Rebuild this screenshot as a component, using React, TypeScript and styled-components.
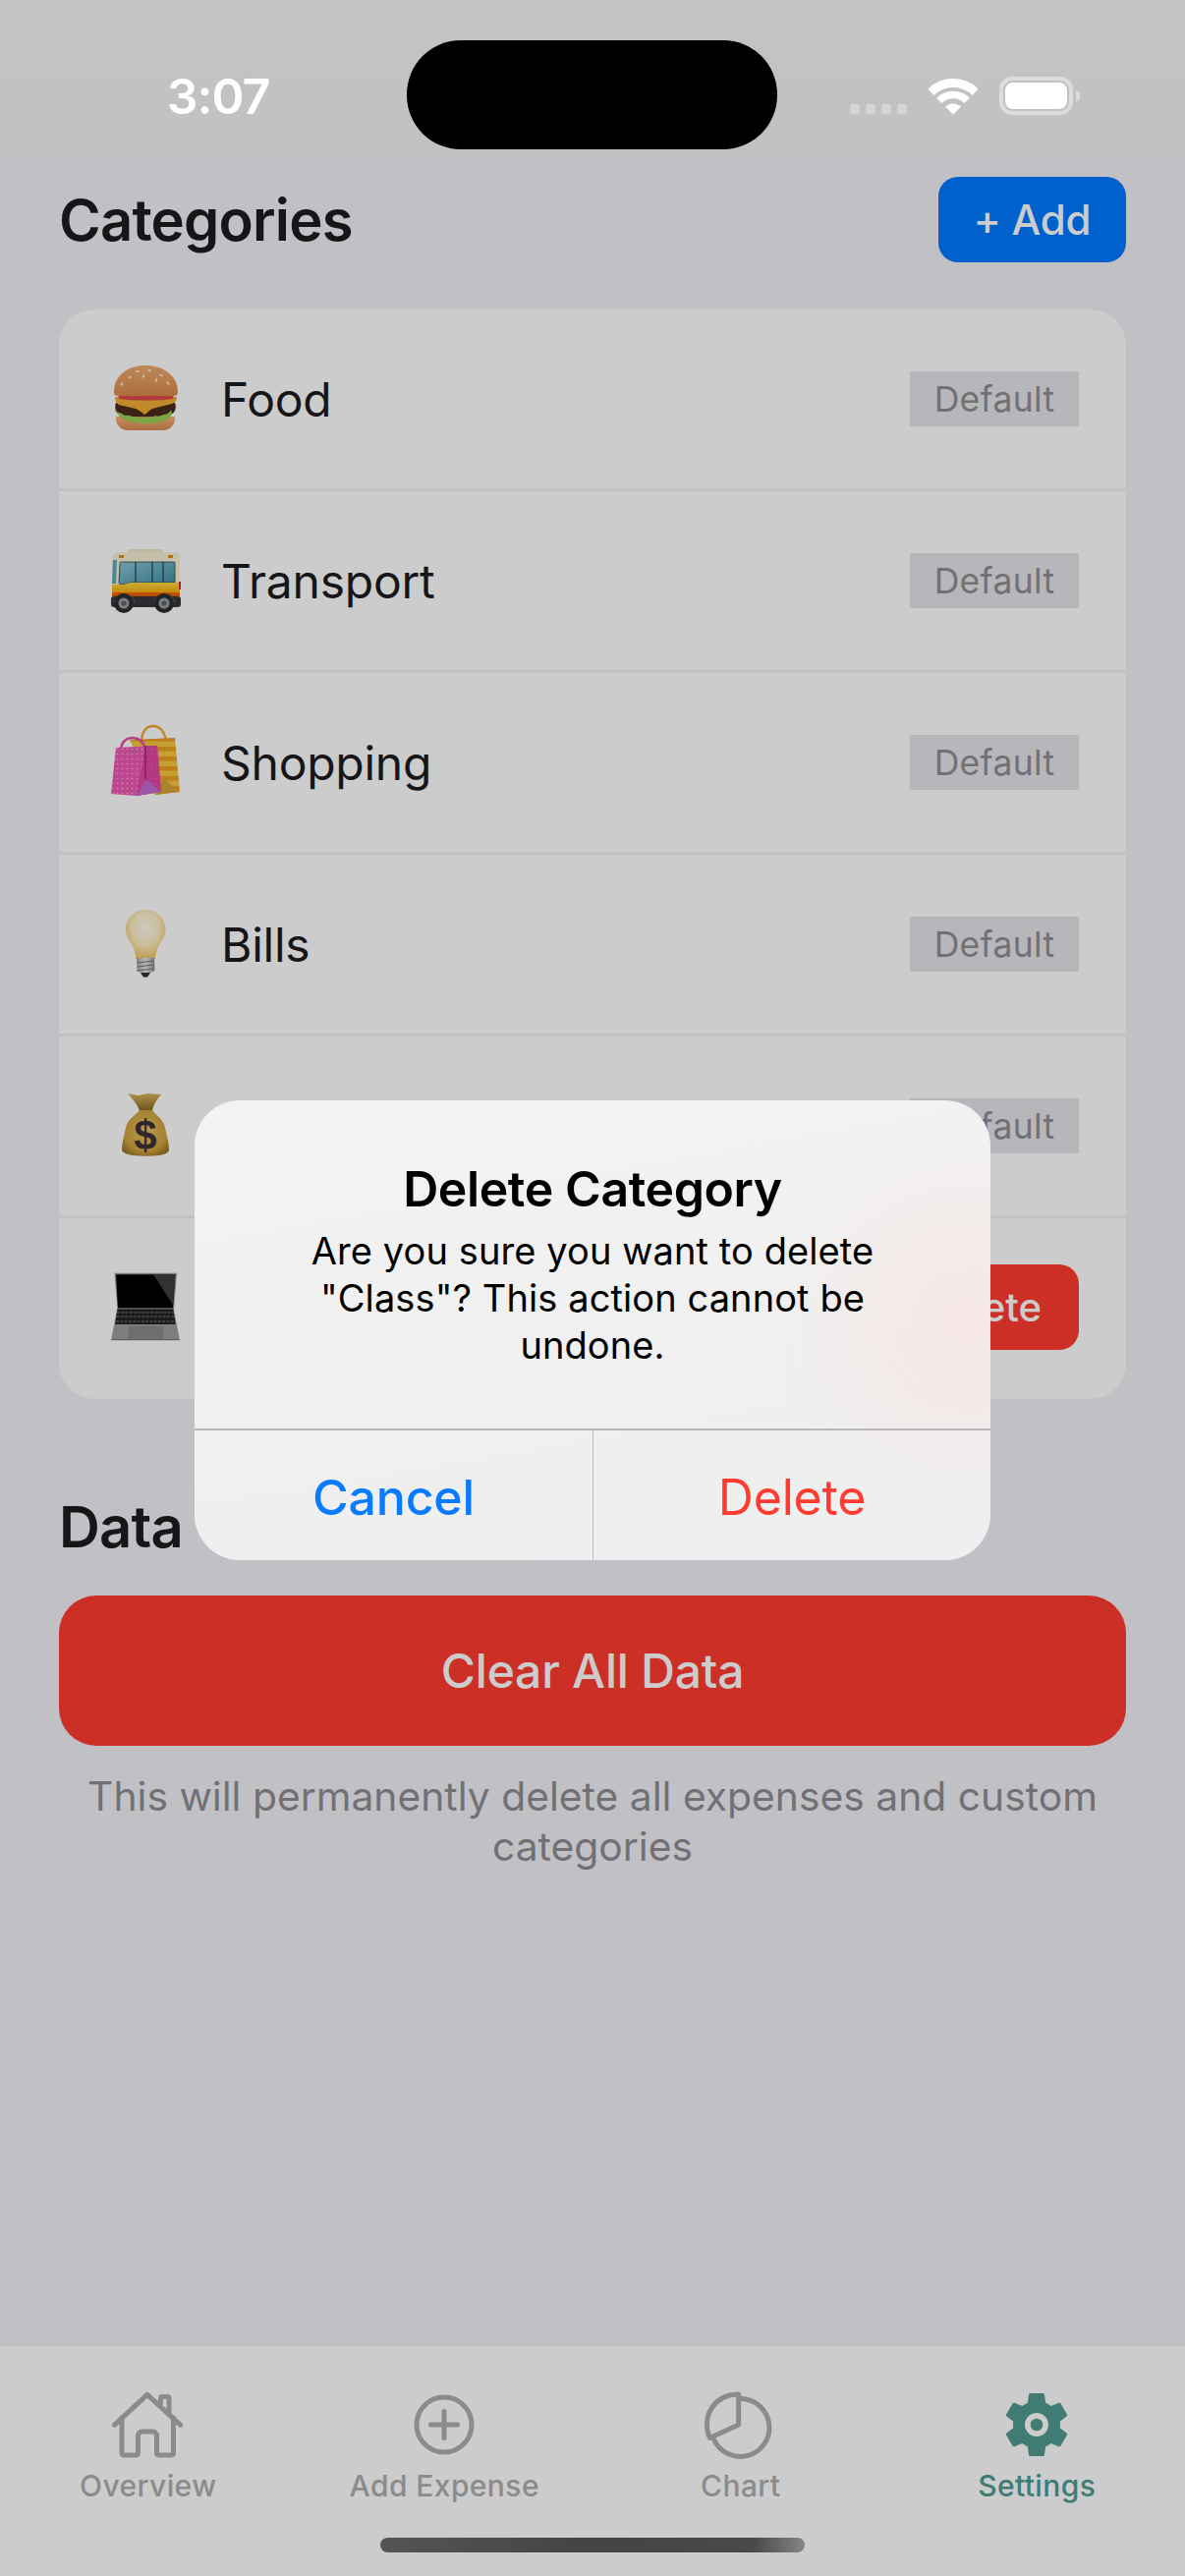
import React from "react";
import styled, { createGlobalStyle } from "styled-components";

const Global = createGlobalStyle`
  html, body { margin: 0; padding: 0; }
  body { font-family: Inter, "Noto Sans", sans-serif; -webkit-font-smoothing: antialiased; }
  #root { width: 1206px; height: 2622px; overflow: hidden; }
`;

const Page = styled.div`
  position: relative;
  width: 1206px;
  height: 2622px;
  display: flex;
  flex-direction: column;
  background: linear-gradient(180deg, #f4f4f4 0, #f2f2f7 190px);
  overflow: hidden;
`;

const StatusBar = styled.div`
  position: relative;
  z-index: 3;
  flex: none;
  height: 180px;
  display: grid;
  grid-template-columns: 414px 377px 1fr;
`;

const Time = styled.div`
  padding: 71px 0 0 30px;
  text-align: center;
  font-size: 50px;
  line-height: 54px;
  font-weight: 600;
  letter-spacing: -1px;
  color: #fff;
`;

const Island = styled.div`
  margin-top: 41px;
  height: 111px;
  border-radius: 55px;
  background: #000;
`;

const StatusIcons = styled.div`
  height: 117px;
  padding-left: 74px;
  display: flex;
  align-items: flex-end;
`;

const SignalDots = styled.div`
  display: flex;
  gap: 6px;
  margin-right: 22px;
  padding-bottom: 1px;
`;

const SignalDot = styled.span`
  width: 10px;
  height: 10px;
  border-radius: 3px;
  background: #d6d6d6;
`;

const Battery = styled.div`
  position: relative;
  box-sizing: border-box;
  width: 75px;
  height: 39px;
  margin-left: 22px;
  padding: 2px;
  border: 4px solid #dcdcdc;
  border-radius: 13px;
  &::after {
    content: "";
    position: absolute;
    right: -11px;
    top: 10px;
    width: 4px;
    height: 11px;
    border-radius: 0 4px 4px 0;
    background: #dcdcdc;
  }
`;

const BatteryFill = styled.div`
  width: 100%;
  height: 100%;
  border-radius: 8px;
  background: #fff;
`;

const Main = styled.main`
  flex: 1;
  padding: 0 60px;
`;

const HeaderRow = styled.div`
  height: 87px;
  display: flex;
  align-items: center;
  justify-content: space-between;
`;

const Title = styled.h2`
  margin: 0;
  font-size: 58px;
  line-height: 68px;
  font-weight: 600;
  letter-spacing: -0.8px;
  color: #1c1c1e;
`;

const AddButton = styled.button`
  width: 191px;
  height: 87px;
  border: 0;
  border-radius: 20px;
  background: #007aff;
  color: #fff;
  font: 500 42px Inter, sans-serif;
  letter-spacing: -0.2px;
`;

const Card = styled.div`
  margin-top: 48px;
  background: #fff;
  border-radius: 36px;
  overflow: hidden;
`;

const Row = styled.div`
  box-sizing: border-box;
  height: 185px;
  padding: 0 48px 0 52px;
  display: flex;
  align-items: center;
  border-bottom: 3px solid #f2f2f7;
  &:last-child {
    border-bottom: 0;
    height: 184px;
    padding-bottom: 3px;
  }
`;

const EmojiIcon = styled.svg`
  flex: none;
  width: 72px;
  height: 72px;
  overflow: visible;
  margin-right: 41px;
`;

const RowName = styled.span`
  flex: 1;
  font-size: 48px;
  font-weight: 400;
  letter-spacing: -0.25px;
  color: #1c1c1e;
`;

const DefaultBadge = styled.span`
  width: 172px;
  height: 56px;
  display: flex;
  align-items: center;
  justify-content: center;
  background: #e5e5ea;
  color: #8e8e93;
  font-size: 35.500px;
  letter-spacing: 0.3px;
`;

const DeleteChip = styled.button`
  height: 87px;
  padding: 0 38px;
  border: 0;
  border-radius: 20px;
  background: #ff3b30;
  color: #fff;
  font: 500 40px Inter, sans-serif;
`;

const DataTitle = styled(Title)`
  margin-top: 96px;
`;

const ClearButton = styled.button`
  display: block;
  width: 100%;
  height: 153px;
  margin-top: 36px;
  border: 0;
  border-radius: 38px;
  background: #ff3b30;
  color: #fff;
  font: 500 48px Inter, sans-serif;
  letter-spacing: -0.2px;
`;

const Note = styled.p`
  margin: 26px 0 0;
  text-align: center;
  font-size: 40.800px;
  line-height: 51px;
  color: #8e8e93;
`;

const TabBar = styled.nav`
  flex: none;
  position: relative;
  height: 234px;
  display: grid;
  grid-template-columns: repeat(4, 1fr);
  background: #fff;
  box-shadow: 0 -6px 16px rgba(0, 0, 0, 0.025);
`;

const Tab = styled.div`
  padding-top: 40px;
  display: flex;
  flex-direction: column;
  align-items: center;
`;

const TabIcon = styled.svg`
  width: 80px;
  height: 80px;
  fill: none;
  stroke: #aeaeae;
  stroke-width: 5;
  stroke-linecap: round;
  stroke-linejoin: round;
`;

const GearIcon = styled.svg`
  width: 82px;
  height: 80px;
  fill: #519a92;
`;

const TabLabel = styled.span<{ $active?: boolean }>`
  margin-top: 4px;
  font-size: 30px;
  line-height: 36px;
  font-weight: 500;
  letter-spacing: 0.4px;
  color: ${(p) => (p.$active ? "#519a92" : "#aeaeae")};
`;

const HomeIndicator = styled.div`
  position: absolute;
  left: 387px;
  bottom: 24px;
  width: 432px;
  height: 15px;
  border-radius: 8px;
  background: linear-gradient(90deg, #6a6a6a 0, #555 50%, #5c5c5c 88%, #a8a8a8 100%);
`;

const Scrim = styled.div`
  position: absolute;
  inset: 0;
  z-index: 2;
  padding-top: 85px;
  display: flex;
  align-items: center;
  justify-content: center;
  box-sizing: border-box;
  background: rgba(0, 0, 0, 0.2);
`;

const Dialog = styled.div`
  width: 810px;
  height: 468px;
  display: flex;
  flex-direction: column;
  border-radius: 46px;
  overflow: hidden;
  background:
    radial-gradient(circle at 97% 48%, rgba(250, 224, 220, 0.55) 0, rgba(250, 224, 220, 0) 24%),
    linear-gradient(170deg, #f3f3f3 0, #efefef 70%, #eeeff1 100%);
`;

const DialogBody = styled.div`
  flex: 1;
  padding: 57px 50px 0;
  text-align: center;
  color: #000;
`;

const DialogTitle = styled.div`
  font-size: 50px;
  line-height: 66px;
  font-weight: 600;
  letter-spacing: -0.4px;
`;

const DialogText = styled.div`
  margin-top: 6px;
  font-size: 38px;
  line-height: 48px;
  letter-spacing: 0.1px;
`;

const DialogActions = styled.div`
  flex: none;
  height: 132px;
  display: grid;
  grid-template-columns: 1fr 1fr;
  border-top: 2px solid #b7b7ba;
`;

const DialogAction = styled.button<{ $danger?: boolean }>`
  border: 0;
  padding: 4px 0 0;
  background: none;
  font-family: Inter, sans-serif;
  font-size: 50px;
  font-weight: ${(p) => (p.$danger ? 400 : 500)};
  letter-spacing: -0.2px;
  color: ${(p) => (p.$danger ? "#ff3b30" : "#0a7aff")};
  border-left: ${(p) => (p.$danger ? "1px solid #c0c0c3" : "0")};
`;

const Burger = () => (
  <EmojiIcon viewBox="0 0 72 72">
    <defs>
      <linearGradient id="bun" x1="0" y1="0" x2="0" y2="1">
        <stop offset="0" stopColor="#eeaa70" />
        <stop offset="1" stopColor="#d98a4c" />
      </linearGradient>
      <linearGradient id="bunb" x1="0" y1="0" x2="0" y2="1">
        <stop offset="0" stopColor="#f6b27a" />
        <stop offset="1" stopColor="#d98a52" />
      </linearGradient>
    </defs>
    <path d="M6 54h60c1 8-5 14-12 14H18C11 68 5 62 6 54z" fill="url(#bunb)" />
    <path d="M6 40h60c2 5 0 10-4 12-8 3-44 3-52 0-4-2-6-7-4-12z" fill="#4b2a1c" />
    <path d="M4 47c3 2 5 3 8 4 3 3 5 1 8 2 3 2 5 1 8 1 3 2 6 2 9 0 3 1 6 1 9-1 3 1 5 1 8-1 3 0 6-1 8-5l1 4c-2 5-5 6-8 7-3 2-5 1-8 2-3 1-6 2-9 1-4 1-7 0-10-1-3 1-6-1-9-2-4 0-8-2-10-5z" fill="#9ccf55" />
    <path d="M5 34h63c0 3-1 5-5 7l-20 5c-4 2-6 5-8 6-2-2-5-4-9-6L9 42c-3-2-4-4-4-8z" fill="#f0ac35" />
    <path d="M8 31h57l-1 5c-14 2-41 2-55 0z" fill="#e0494c" />
    <path d="M4 29C4 12 18 2 36 2s33 10 33 27c0 3-2 4-5 4H9c-3 0-5-1-5-4z" fill="url(#bun)" />
    <g fill="#f8e8d0">
      <ellipse cx="28" cy="8" rx="2.200" ry="1" />
      <ellipse cx="40" cy="7" rx="2.200" ry="1" transform="rotate(25 40 7)" />
      <ellipse cx="52" cy="12" rx="2.200" ry="1" transform="rotate(30 52 12)" />
      <ellipse cx="34" cy="13" rx="2" ry="1" transform="rotate(-50 34 13)" />
      <ellipse cx="20" cy="14" rx="2" ry="1" transform="rotate(-40 20 14)" />
      <ellipse cx="47" cy="17" rx="2" ry="1" transform="rotate(-70 47 17)" />
      <ellipse cx="59" cy="20" rx="2" ry="1" transform="rotate(45 59 20)" />
      <ellipse cx="12" cy="21" rx="2" ry="1" transform="rotate(-50 12 21)" />
    </g>
  </EmojiIcon>
);

const Bus = () => (
  <EmojiIcon viewBox="0 0 72 72">
    <defs>
      <linearGradient id="glass" x1="0" y1="0" x2="1" y2="1">
        <stop offset="0" stopColor="#8cc8d6" />
        <stop offset="1" stopColor="#3f8ea6" />
      </linearGradient>
      <linearGradient id="band" x1="0" y1="0" x2="0" y2="1">
        <stop offset="0" stopColor="#fdd83e" />
        <stop offset="0.7" stopColor="#f6ae14" />
        <stop offset="0.75" stopColor="#ec6a06" />
        <stop offset="1" stopColor="#e65a00" />
      </linearGradient>
    </defs>
    <rect x="18" y="4" width="36" height="6" rx="2" fill="#eee7cb" />
    <path d="M8 7h58c3 0 5 2 5 5v42H2V18c0-7 2-11 6-11z" fill="#f7f0d4" />
    <path d="M3 15h4l-1 24H2z" fill="#5aa9bd" />
    <path d="M11 17h54c1 0 1 1 1 2v19H21c-3 0-5 2-7 2h-3c-1 0-2-1-2-2l1-19c0-1 0-2 1-2z" fill="url(#glass)" stroke="#2e3b3f" strokeWidth="0.8" />
    <path d="M26 17v21M43 17v21M54 17v21" stroke="#2e3b3f" strokeWidth="1.200" />
    <rect x="9" y="10" width="5" height="3" fill="#e88a10" />
    <rect x="59" y="10" width="5" height="3" fill="#e88a10" />
    <path d="M2 40h11c3 0 6-2 9-2h49v14H2z" fill="url(#band)" />
    <rect x="70" y="37" width="2" height="8" fill="#e0262c" />
    <rect x="1" y="52" width="71" height="11" rx="3" fill="#34363a" />
    <path d="M3 58a12 12 0 0 1 23 0zM44 58a12 12 0 0 1 23 0z" fill="#55585c" />
    <g fill="#2c2d30">
      <circle cx="14" cy="59" r="10" />
      <circle cx="55" cy="59" r="10" />
    </g>
    <g fill="#9a9ea3">
      <circle cx="14" cy="59" r="5.500" />
      <circle cx="55" cy="59" r="5.500" />
    </g>
    <g fill="#5d6166">
      <circle cx="14" cy="59" r="2.600" />
      <circle cx="55" cy="59" r="2.600" />
    </g>
  </EmojiIcon>
);

const Bags = () => (
  <EmojiIcon viewBox="0 0 72 72">
    <defs>
      <pattern id="stripes" width="10" height="10" patternUnits="userSpaceOnUse">
        <rect width="10" height="10" fill="#f5c842" />
        <rect width="10" height="4.500" fill="#eb9f24" />
      </pattern>
      <pattern id="dots" width="5" height="5" patternUnits="userSpaceOnUse">
        <rect width="5" height="5" fill="#ee59b4" />
        <circle cx="2.500" cy="2.500" r="0.800" fill="#f8b5dc" />
      </pattern>
    </defs>
    <path d="M32 14C33 3 38 -1 44 -1c7 0 11 6 13 14" fill="none" stroke="#f3a93a" strokeWidth="2.400" />
    <path d="M20 13l46-2 5 55-25 3z" fill="url(#stripes)" />
    <path d="M46 69l8-17 17 14z" fill="#d8a33b" />
    <path d="M11 24c0-8 5-13 12-13 7 0 11 5 13 11" fill="none" stroke="#e64fa8" strokeWidth="2.600" />
    <path d="M6 21l42-2 4 47-25 4-26-2z" fill="url(#dots)" />
    <path d="M36 19h12l4 47-25 4z" fill="#dd3f9d" opacity="0.750" />
    <path d="M27 70l10-17 15 13z" fill="#c46bd0" />
    <path d="M36 19v31l1 3" fill="none" stroke="#a91f7c" strokeWidth="1.400" />
    <rect x="24.500" y="21" width="1.400" height="6" fill="#8e8e8e" />
  </EmojiIcon>
);

const Bulb = () => (
  <EmojiIcon viewBox="0 0 72 72">
    <defs>
      <radialGradient id="glow" cx="0.5" cy="0.38" r="0.62">
        <stop offset="0" stopColor="#fffdf0" />
        <stop offset="0.55" stopColor="#fdeec4" />
        <stop offset="1" stopColor="#f0c560" />
      </radialGradient>
      <linearGradient id="screw" x1="0" y1="0" x2="1" y2="0">
        <stop offset="0" stopColor="#a3a3a3" />
        <stop offset="0.5" stopColor="#e6e6e6" />
        <stop offset="1" stopColor="#8d8d8d" />
      </linearGradient>
    </defs>
    <path d="M36 1c11.500 0 20.500 9 20.500 20 0 8-4.500 12-7 17-2 4-3 8-3.500 13H26.500c-.5-5-1.500-9-3.500-13-2.500-5-7-9-7-17C16 10 24.500 1 36 1z" fill="url(#glow)" />
    <path d="M27 50h18l.5 13c-3 3-16 3-18 0z" fill="url(#screw)" />
    <path d="M27.500 55l17.500-2M27.500 59l17.500-2M27.500 63l17.500-2" stroke="#777" strokeWidth="1" />
    <path d="M31 65h10l-2.500 4c-1.500 1-3.500 1-5 0z" fill="#333" />
  </EmojiIcon>
);

const MoneyBag = () => (
  <EmojiIcon viewBox="0 0 72 72">
    <defs>
      <radialGradient id="sack" cx="0.5" cy="0.45" r="0.65">
        <stop offset="0" stopColor="#e6c463" />
        <stop offset="0.7" stopColor="#cfa13d" />
        <stop offset="1" stopColor="#8f6f22" />
      </radialGradient>
      <linearGradient id="neck" x1="0" y1="0" x2="0" y2="1">
        <stop offset="0" stopColor="#d9b65b" />
        <stop offset="1" stopColor="#8a6620" />
      </linearGradient>
    </defs>
    <path d="M18 3l11 2 9-2 14 1c-4 5-8 10-9 17H30c-2-7-7-12-12-18z" fill="url(#neck)" />
    <path d="M30 20h13c3 5 11 8 13 18 2 9 4 16 4 22 0 3-4 5-10 6-8 1-18 1-27 0-6-1-11-3-11-6 0-6 2-13 4-22 2-10 11-13 14-18z" fill="url(#sack)" />
    <text x="36" y="60" textAnchor="middle" fontFamily="Liberation Sans, sans-serif" fontWeight="700" fontSize="42" fill="#3a3238">$</text>
  </EmojiIcon>
);

const Laptop = () => (
  <EmojiIcon viewBox="0 0 72 72">
    <path d="M4.500 .7h63.500L65 38H7.500z" fill="#9a9a9a" />
    <path d="M6 2.300h60.500L64 36.500H8z" fill="#000" />
    <path d="M44 2.300h22.500L64 33z" fill="#4a4a4a" opacity="0.850" />
    <path d="M7.300 36.700h57.400L70.700 68H1.300z" fill="#9e9e9e" />
    <path d="M7.500 37.500h57l2 15.500h-61.500z" fill="#222" />
    <g stroke="#888" strokeWidth="0.900" strokeDasharray="3 1.300">
      <path d="M7 41h58" />
      <path d="M6.500 45h59" />
      <path d="M6 50h60" />
    </g>
    <rect x="18.700" y="54.700" width="35.300" height="13" fill="#8a8a8a" />
    <path d="M1 68h70v1.300H1z" fill="#777" />
  </EmojiIcon>
);

const HomeGlyph = () => (
  <TabIcon viewBox="1.500 0 80 80">
    <path d="M7 40.300 40.300 9.300 74.300 40.300" />
    <path d="M14.500 33V69a2 2 0 0 0 2 2H29a2 2 0 0 0 2-2V51a4 4 0 0 1 4-4H46a4 4 0 0 1 4 4V69a2 2 0 0 0 2 2H65a2 2 0 0 0 2-2V33" />
    <path d="M54 18V13a1.500 1.500 0 0 1 1.500-1.500H61a1.500 1.500 0 0 1 1.500 1.500V29" />
  </TabIcon>
);

const PlusGlyph = () => (
  <TabIcon viewBox="0 0 80 80">
    <circle cx="40" cy="40" r="28" />
    <path d="M26.500 40H53.500M40 26.500V53.500" />
  </TabIcon>
);

const ChartGlyph = () => (
  <TabIcon viewBox="0 0 80 80">
    <path d="M37.700 9A31 31 0 0 0 8.500 53.500L37.700 40Z" />
    <path d="M41 13.500A29.500 29.500 0 1 1 12.500 55" />
  </TabIcon>
);

const GearGlyph = () => (
  <GearIcon viewBox="0 0 24 24">
    <path d="M19.14 12.94c.04-.3.06-.61.06-.94 0-.32-.02-.64-.07-.94l2.03-1.58c.18-.14.23-.41.12-.61l-1.92-3.32c-.12-.22-.37-.29-.59-.22l-2.39.96c-.5-.38-1.03-.7-1.62-.94l-.36-2.54c-.04-.24-.24-.41-.48-.41h-3.84c-.24 0-.43.17-.47.41l-.36 2.54c-.59.24-1.13.57-1.62.94l-2.39-.96c-.22-.08-.47 0-.59.22L2.740 8.870c-.12.21-.08.47.12.61l2.03 1.580c-.05.3-.09.63-.09.94s.02.64.07.94l-2.030 1.580c-.18.14-.23.41-.12.61l1.920 3.320c.12.22.37.29.59.22l2.390-.96c.5.38 1.030.7 1.620.94l.36 2.540c.05.24.24.41.48.41h3.840c.24 0 .44-.17.47-.41l.36-2.540c.59-.24 1.130-.56 1.620-.94l2.390.96c.22.08.47 0 .59-.22l1.920-3.320c.12-.22.07-.47-.12-.61l-2.010-1.580zM12 15.600c-1.980 0-3.600-1.620-3.600-3.600s1.620-3.600 3.600-3.600 3.600 1.620 3.600 3.600-1.620 3.600-3.600 3.600z" />
    <circle cx="12" cy="12" r="1.900" />
  </GearIcon>
);

const WifiGlyph = () => (
  <svg width="50" height="38" viewBox="0 0 50 38" fill="none">
    <path d="M2.400 14.900A32 32 0 0 1 47.600 14.900" stroke="#fff" strokeWidth="9" />
    <path d="M10.860 23.360A20 20 0 0 1 39.140 23.360" stroke="#fff" strokeWidth="7.500" />
    <path d="M25 37.500 17.200 29.700A11 11 0 0 1 32.800 29.700Z" fill="#fff" />
  </svg>
);

const rows = [
  { name: "Food", Icon: Burger },
  { name: "Transport", Icon: Bus },
  { name: "Shopping", Icon: Bags },
  { name: "Bills", Icon: Bulb },
  { name: "Income", Icon: MoneyBag },
];

export default function App() {
  return (
    <Page>
      <Global />
      <StatusBar>
        <Time>3:07</Time>
        <Island />
        <StatusIcons>
          <SignalDots>
            <SignalDot />
            <SignalDot />
            <SignalDot />
            <SignalDot />
          </SignalDots>
          <WifiGlyph />
          <Battery>
            <BatteryFill />
          </Battery>
        </StatusIcons>
      </StatusBar>
      <Main>
        <HeaderRow>
          <Title>Categories</Title>
          <AddButton>+ Add</AddButton>
        </HeaderRow>
        <Card>
          {rows.map(({ name, Icon }) => (
            <Row key={name}>
              <Icon />
              <RowName>{name}</RowName>
              <DefaultBadge>Default</DefaultBadge>
            </Row>
          ))}
          <Row>
            <Laptop />
            <RowName>Class</RowName>
            <DeleteChip>Delete</DeleteChip>
          </Row>
        </Card>
        <DataTitle>Data</DataTitle>
        <ClearButton>Clear All Data</ClearButton>
        <Note>This will permanently delete all expenses and custom categories</Note>
      </Main>
      <TabBar>
        <Tab>
          <HomeGlyph />
          <TabLabel>Overview</TabLabel>
        </Tab>
        <Tab>
          <PlusGlyph />
          <TabLabel>Add Expense</TabLabel>
        </Tab>
        <Tab>
          <ChartGlyph />
          <TabLabel>Chart</TabLabel>
        </Tab>
        <Tab>
          <GearGlyph />
          <TabLabel $active>Settings</TabLabel>
        </Tab>
        <HomeIndicator />
      </TabBar>
      <Scrim>
        <Dialog>
          <DialogBody>
            <DialogTitle>Delete Category</DialogTitle>
            <DialogText>Are you sure you want to delete "Class"? This action cannot be undone.</DialogText>
          </DialogBody>
          <DialogActions>
            <DialogAction>Cancel</DialogAction>
            <DialogAction $danger>Delete</DialogAction>
          </DialogActions>
        </Dialog>
      </Scrim>
    </Page>
  );
}
